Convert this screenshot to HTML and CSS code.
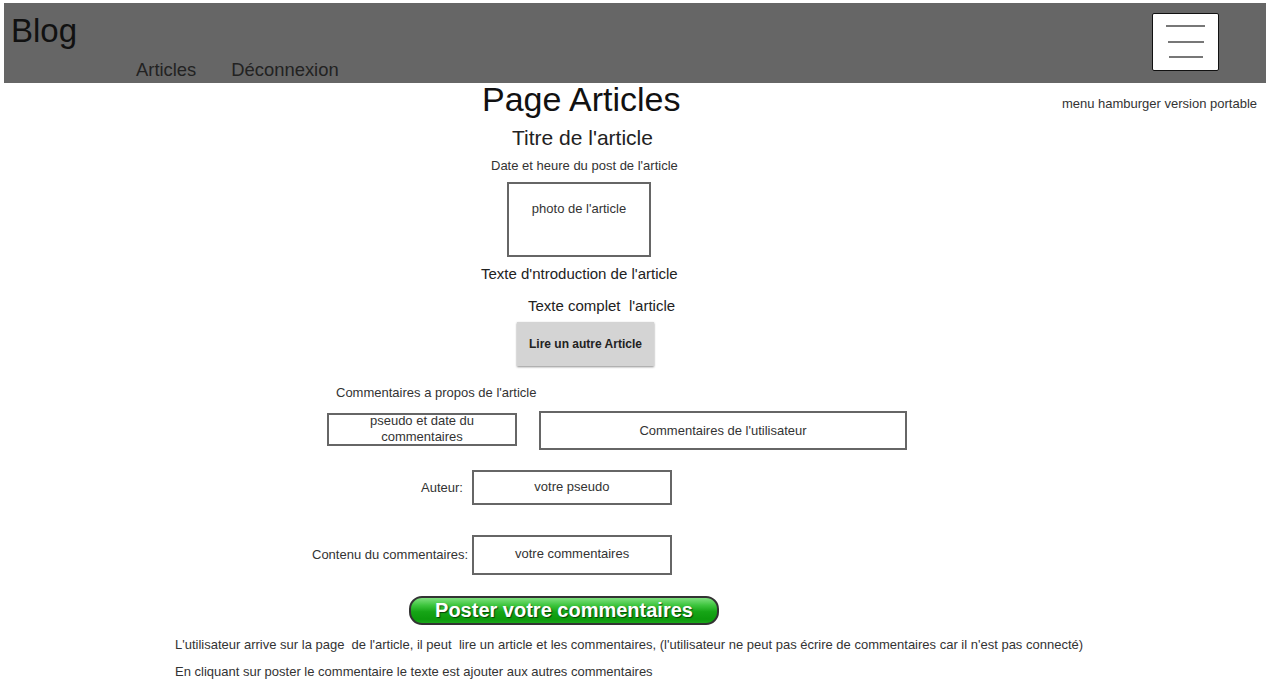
FILE: index.html
```html
<!DOCTYPE html>
<html lang="fr">
<head>
<meta charset="utf-8">
<title>Blog - Page Articles</title>
<link rel="stylesheet" href="styles.css">
</head>
<body>
<div class="page">
  <header class="header">
    <div class="brand-col">
      <div class="brand">Blog</div>
      <nav class="nav">
        <a class="nav-link" href="#">Articles</a>
        <a class="nav-link" href="#">Déconnexion</a>
      </nav>
    </div>
    <div class="burger">
      <span class="bar b1"></span>
      <span class="bar b2"></span>
      <span class="bar b3"></span>
    </div>
  </header>

  <div class="title-row">
    <h1 class="page-title">Page Articles</h1>
    <div class="note">menu hamburger version portable</div>
  </div>

  <h2 class="art-title">Titre de l'article</h2>
  <div class="art-date">Date et heure du post de l'article</div>
  <div class="photo">photo de l'article</div>
  <div class="intro">Texte d'ntroduction de l'article</div>
  <div class="full">Texte complet&nbsp; l'article</div>
  <button class="btn-other">Lire un autre Article</button>

  <div class="com-label">Commentaires a propos de l'article</div>
  <div class="com-row">
    <div class="box box-meta">pseudo et date du commentaires</div>
    <div class="box box-com">Commentaires de l'utilisateur</div>
  </div>

  <div class="form-row row-author">
    <label class="lbl lbl-author">Auteur:</label>
    <div class="box field field-author">votre pseudo</div>
  </div>
  <div class="form-row row-content">
    <label class="lbl lbl-content">Contenu du commentaires:</label>
    <div class="box field field-content">votre commentaires</div>
  </div>

  <button class="btn-post">Poster votre commentaires</button>

  <p class="foot f1">L'utilisateur arrive sur la page&nbsp; de l'article, il peut&nbsp; lire un article et les commentaires, (l'utilisateur ne peut pas écrire de commentaires car il n'est pas connecté)</p>
  <p class="foot f2">En cliquant sur poster le commentaire le texte est ajouter aux autres commentaires</p>
</div>
</body>
</html>
```

FILE: styles.css
```css
* { box-sizing: border-box; }
html, body { margin: 0; padding: 0; background: #fff; }
body {
  font-family: "Liberation Sans", Arial, sans-serif;
  color: #333;
  width: 1270px;
  height: 695px;
  overflow: hidden;
}
.page {
  padding: 3px 4px 0 4px;
}

/* header */
.header {
  height: 80px;
  background: #666666;
  display: flex;
  justify-content: space-between;
  align-items: flex-start;
}
.brand-col { padding-top: 10px; }
.brand {
  font-size: 33px;
  line-height: 36px;
  color: #111;
  margin-left: 7px;
}
.nav {
  display: flex;
  margin-top: 10px;
  margin-left: 132px;
  gap: 35px;
}
.nav-link {
  font-size: 18.4px;
  line-height: 22px;
  color: #222;
  text-decoration: none;
}
.burger {
  width: 67px;
  height: 58px;
  margin-top: 10px;
  margin-right: 47px;
  background: #fff;
  border: 1px solid #111;
  border-top-width: 1.5px;
  border-radius: 2px;
  display: flex;
  flex-direction: column;
  align-items: center;
  padding-top: 11px;
  gap: 13.5px;
}
.bar { display: block; height: 2px; background: #777; }
.b1 { width: 39px; }
.b2 { width: 36px; }
.b3 { width: 34px; }

/* title row */
.title-row {
  display: flex;
  align-items: flex-start;
}
.page-title {
  margin: 0 0 0 478px;
  font-size: 34px;
  line-height: 33px;
  font-weight: normal;
  color: #111;
}
.note {
  margin-left: auto;
  margin-right: 9px;
  margin-top: 13px;
  font-size: 13px;
  line-height: 16px;
  color: #333;
}

.art-title {
  margin: 10px 0 0 508px;
  font-size: 21px;
  line-height: 24px;
  font-weight: normal;
  color: #222;
}
.art-date {
  margin: 8px 0 0 487px;
  font-size: 13px;
  line-height: 16px;
}
.photo {
  margin: 8px 0 0 503px;
  width: 144px;
  height: 75px;
  border: 2px solid #666;
  text-align: center;
  padding-top: 17px;
  font-size: 13px;
  line-height: 16px;
}
.intro {
  margin: 8px 0 0 477px;
  font-size: 15px;
  line-height: 18px;
  color: #222;
}
.full {
  margin: 14px 0 0 524px;
  font-size: 15px;
  line-height: 18px;
  color: #222;
}
.btn-other {
  display: block;
  margin: 7px 0 0 513px;
  width: 137px;
  height: 44px;
  background: #d4d4d4;
  border: none;
  box-shadow: 0 1px 2px rgba(0,0,0,0.45);
  font-family: "Liberation Sans", Arial, sans-serif;
  font-size: 12px;
  font-weight: bold;
  color: #222;
  padding: 0;
}

.com-label {
  margin: 19px 0 0 332px;
  font-size: 13px;
  line-height: 16px;
}
.com-row {
  display: flex;
  align-items: flex-start;
  margin: 10px 0 0 323px;
}
.box {
  border: 2px solid #666;
  display: flex;
  align-items: center;
  justify-content: center;
  text-align: center;
  font-size: 13px;
  line-height: 16px;
  color: #333;
}
.box-meta { width: 190px; height: 33px; padding: 0 30px 1px; margin-top: 2px; }
.box-com { width: 368px; height: 39px; margin-left: 22px; }

.form-row {
  display: flex;
  align-items: center;
}
.row-author { margin: 20px 0 0 417px; }
.row-content { margin: 30px 0 0 308px; }
.lbl { font-size: 13px; line-height: 16px; color: #333; }
.lbl-author { margin-right: 9px; }
.lbl-content { margin-right: 4px; }
.field { width: 200px; }
.field-author { height: 35px; padding-bottom: 1px; }
.field-content { height: 40px; padding-bottom: 2px; }

.btn-post {
  display: block;
  margin: 21px 0 0 405px;
  width: 310px;
  height: 29px;
  border: 2px solid #333;
  border-radius: 13px;
  background: linear-gradient(#7ee07e 0%, #3cc43c 30%, #16a516 55%, #0d9a0d 85%, #1aa81a 100%);
  color: #fff;
  font-family: "Liberation Sans", Arial, sans-serif;
  font-size: 20px;
  font-weight: bold;
  line-height: 24px;
  padding: 0 0 3px 0;
  text-shadow: 1px 1px 1px rgba(0,0,0,0.6);
}

.foot {
  margin: 0 0 0 171px;
  font-size: 13px;
  line-height: 16px;
  color: #333;
}
.f1 { margin-top: 12px; }
.f2 { margin-top: 11px; }
```
